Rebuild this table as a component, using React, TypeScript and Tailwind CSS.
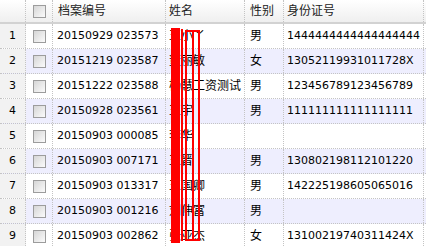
import React from "react";

type Row = { n: number; code: string; name: string; sex: string; id: string };

const rows: Row[] = [
  { n: 1, code: "20150929 023573", name: "王小丫", sex: "男", id: "1444444444444444444" },
  { n: 2, code: "20151219 023587", name: "董丽敏", sex: "女", id: "13052119931011728X" },
  { n: 3, code: "20151222 023588", name: "杨慧工资测试", sex: "男", id: "123456789123456789" },
  { n: 4, code: "20150928 023561", name: "王宇", sex: "男", id: "111111111111111111" },
  { n: 5, code: "20150903 000085", name: "李华", sex: "", id: "" },
  { n: 6, code: "20150903 007171", name: "王晋", sex: "男", id: "130802198112101220" },
  { n: 7, code: "20150903 013317", name: "王国卿", sex: "男", id: "142225198605065016" },
  { n: 8, code: "20150903 001216", name: "刘伸富", sex: "男", id: "" },
  { n: 9, code: "20150903 002862", name: "张亚杰", sex: "女", id: "13100219740311424X" },
];

const cell =
  "h-full flex items-center overflow-hidden whitespace-nowrap border-r border-dotted border-[#c4c4c4]";

function Check() {
  return (
    <div className="w-[13px] h-[13px] border border-[#9c9c9c] bg-gradient-to-br from-[#d6d6d6] to-[#fbfbfb]" />
  );
}

export default function App() {
  return (
    <div
      className="relative w-[426px] h-[246px] overflow-hidden bg-white text-[11px] text-black"
      style={{ fontFamily: '"DejaVu Sans", "Noto Sans CJK SC", sans-serif' }}
    >
      {/* header */}
      <div className="flex h-[24px] border-b-2 border-[#d2d2d2] bg-gradient-to-b from-[#ffffff] to-[#efefef]">
        <div className={`${cell} w-[26px]`} />
        <div className={`${cell} w-[27px] justify-center`}>
          <Check />
        </div>
        <div className={`${cell} w-[113px] pl-[5px] text-[12px] text-[#222]`}>档案编号</div>
        <div className={`${cell} w-[79px] pl-[3px] text-[12px] text-[#222]`}>姓名</div>
        <div className={`${cell} w-[39px] pl-[5px] text-[12px] text-[#222]`}>性别</div>
        <div className={`${cell} w-[140px] pl-[3px] text-[12px] text-[#222]`}>身份证号</div>
      </div>

      {rows.map((r) => (
        <div
          key={r.n}
          className={`flex h-[25px] border-b border-dotted border-[#c4c4c4] ${
            r.n % 2 === 0 ? "bg-[#eeeefe]" : "bg-white"
          }`}
        >
          <div className={`${cell} w-[26px] justify-center bg-[#f2f2f2]`}>{r.n}</div>
          <div className={`${cell} w-[27px] justify-center`}>
            <Check />
          </div>
          <div className={`${cell} w-[113px] pl-[4px]`}>{r.code}</div>
          <div className={`${cell} w-[79px] pl-[3px] text-[12px]`}>{r.name}</div>
          <div className={`${cell} w-[39px] pl-[5px] text-[12px]`}>{r.sex}</div>
          <div className={`${cell} w-[140px] pl-[3px]`}>{r.id}</div>
        </div>
      ))}

      {/* red annotation overlay */}
      <div className="absolute left-[171px] top-[28px] w-[9px] h-[215px] bg-[#ff0000]" />
      <div className="absolute left-[181px] top-[29px] w-[2px] h-[212px] bg-[#ff0000]" />
      <div className="absolute left-[185px] top-[30px] w-[15px] h-[211px] border-2 border-[#ff0000]" />
      <div className="absolute left-[192px] top-[30px] w-[2px] h-[211px] bg-[#ff0000]" />
    </div>
  );
}
